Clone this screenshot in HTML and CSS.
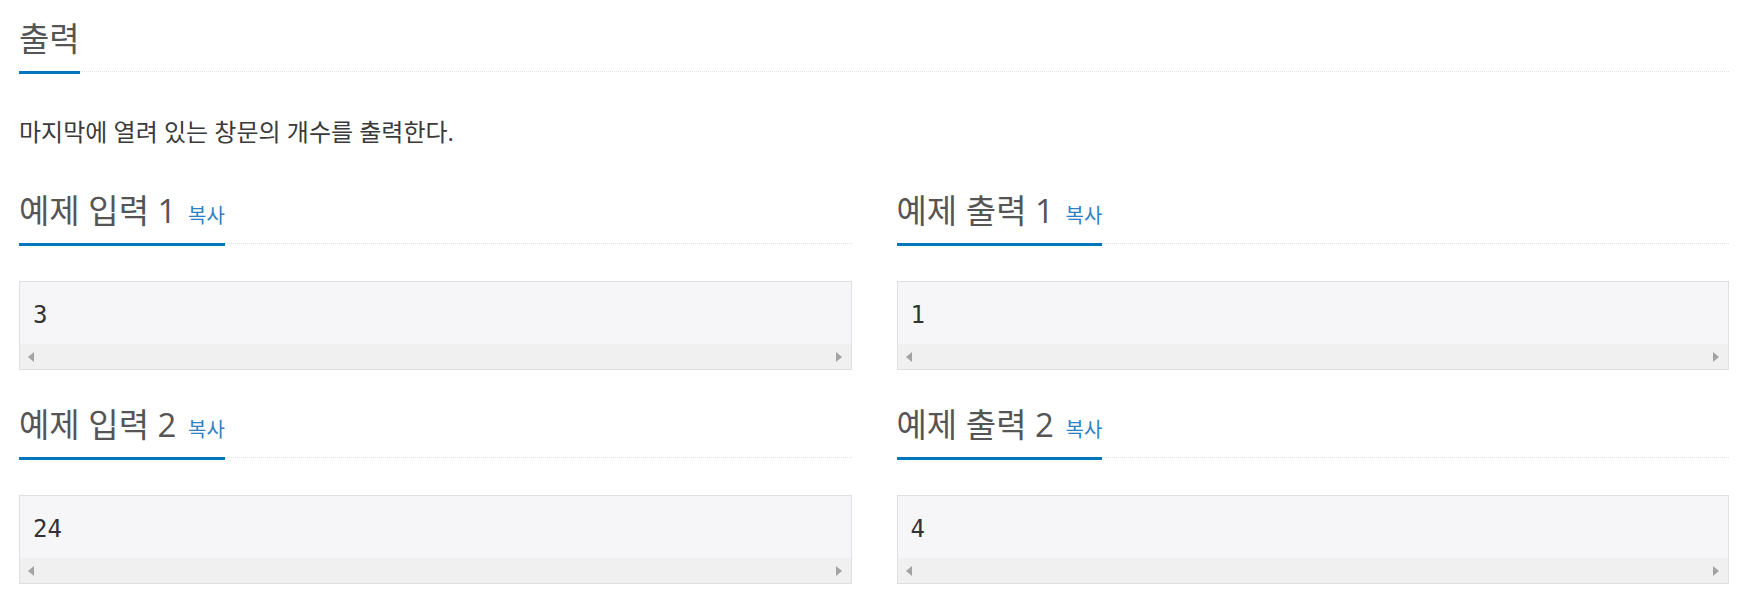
FILE: index.html
```html
<!DOCTYPE html>
<html lang="ko">
<head>
<meta charset="utf-8">
<title>출력</title>
<link rel="stylesheet" href="styles.css">
</head>
<body>
<div class="page">
  <section class="output-section">
    <div class="headline"><h2>출력</h2></div>
    <p class="desc">마지막에 열려 있는 창문의 개수를 출력한다.</p>
  </section>
  <div class="samples">
    <section class="sample">
      <div class="headline"><h2>예제 입력 1 <button class="copy">복사</button></h2></div>
      <div class="sampledata"><pre>3</pre><div class="scrollbar"><span class="arrow arrow-left"></span><span class="arrow arrow-right"></span></div></div>
    </section>
    <section class="sample">
      <div class="headline"><h2>예제 출력 1 <button class="copy">복사</button></h2></div>
      <div class="sampledata"><pre>1</pre><div class="scrollbar"><span class="arrow arrow-left"></span><span class="arrow arrow-right"></span></div></div>
    </section>
    <section class="sample">
      <div class="headline"><h2>예제 입력 2 <button class="copy">복사</button></h2></div>
      <div class="sampledata"><pre>24</pre><div class="scrollbar"><span class="arrow arrow-left"></span><span class="arrow arrow-right"></span></div></div>
    </section>
    <section class="sample">
      <div class="headline"><h2>예제 출력 2 <button class="copy">복사</button></h2></div>
      <div class="sampledata"><pre>4</pre><div class="scrollbar"><span class="arrow arrow-left"></span><span class="arrow arrow-right"></span></div></div>
    </section>
  </div>
</div>
</body>
</html>
```

FILE: styles.css
```css
html, body {
  margin: 0;
  padding: 0;
  background: #ffffff;
}

body {
  font-family: "Open Sans", "Noto Sans CJK KR", sans-serif;
  color: #3a3a3a;
}

.page {
  padding: 20px 21px 0 19px;
}

.headline {
  display: flex;
  border-bottom: 1px dotted #dfe3e8;
}

.headline h2 {
  margin: 0 0 -3px 0;
  padding: 1px 0 14px 0;
  font-size: 33px;
  line-height: 36px;
  font-weight: 400;
  color: #555555;
  border-bottom: 3px solid #0076c0;
}

.copy {
  font-family: inherit;
  font-size: 20px;
  line-height: 1;
  color: #2f7fc4;
  background: none;
  border: 0;
  padding: 0 0 0 3px;
  margin: 0;
  cursor: pointer;
}

.desc {
  margin: 43px 0 0 0;
  font-size: 24px;
  line-height: 33px;
}

.samples {
  margin-top: 44px;
  display: grid;
  grid-template-columns: 1fr 1fr;
  column-gap: 45px;
  row-gap: 36px;
}

.sampledata {
  margin-top: 37px;
  border: 1px solid #dedee3;
  background: #f6f6f8;
}

.sampledata pre {
  margin: 0;
  padding: 16px 13px 12px 13px;
  font-family: "DejaVu Sans Mono", monospace;
  font-size: 24px;
  line-height: 34px;
  color: #333333;
}

.scrollbar {
  height: 25px;
  background: #f0f0f0;
  display: flex;
  align-items: center;
  justify-content: space-between;
  padding: 0 9px 0 8px;
}

.arrow {
  width: 0;
  height: 0;
  border-top: 5px solid transparent;
  border-bottom: 5px solid transparent;
}

.arrow-left {
  border-right: 6px solid #a3a3a3;
}

.arrow-right {
  border-left: 6px solid #a3a3a3;
}
```
